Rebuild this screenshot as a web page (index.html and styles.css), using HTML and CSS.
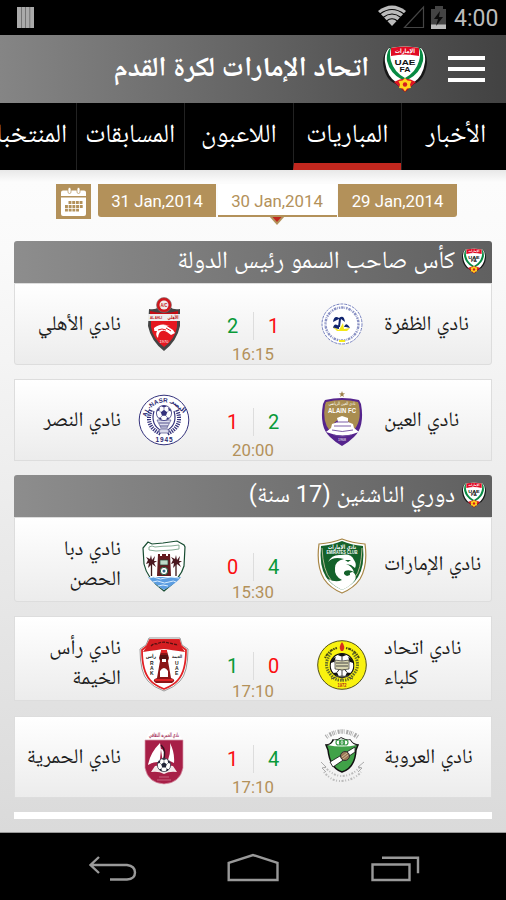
FILE: index.html
```html
<!DOCTYPE html>
<html lang="ar">
<head>
<meta charset="utf-8">
<title>اتحاد الإمارات لكرة القدم</title>
<link rel="stylesheet" href="styles.css">
</head>
<body>
<svg class="defs" width="0" height="0" aria-hidden="true">
  <symbol id="ball" viewBox="0 0 20 20">
    <circle cx="10" cy="10" r="9.500" fill="#fff" stroke="currentColor"/>
    <path d="m10 6 4 3-1.500 4.500h-5L6 9zM6.500 1.500 10 3l3.500-1.500Q10-.5 6.500 1.500zM1 8l3-1 1-4Q1 5 1 8zM19 8l-3-1-1-4q4 2 4 5zM3 16l3-.5 1.500 3Q4 18 3 16zM17 16l-3-.5-1.500 3Q16 18 17 16z" fill="currentColor"/>
    <path d="M10 3v3M4 7l2 2M16 7l-2 2M6 15.500l1.500-2M14 15.500l-1.500-2" stroke="currentColor" stroke-width=".7"/>
  </symbol>
</svg>

<div class="status">
  <svg width="18" height="22" viewBox="0 0 18 22"><path d="M0 0h17v21H0z" fill="#aaa"/><path d="M4.500 0v21M8.500 0v21M12.800 0v21" stroke="#666" stroke-width=".8"/></svg>
  <div class="status-right">
    <svg width="74" height="26" viewBox="0 0 74 26">
      <path d="M0 7Q14-4 28 7L14 22Z" fill="#bbb"/>
      <path d="M2 10Q14 1 26 10M5 13.500Q14 6.500 23 13.500M8.500 17Q14 12.500 19.500 17" fill="none" stroke="#000" stroke-width="1.100"/>
      <path d="M45.500 3v20.500h-19z" fill="none" stroke="#454545" stroke-width="1.200"/>
      <path d="M57 2h8v3h3v20H53V5h4z" fill="#444"/><path d="M53 20.500h15V25H53z" fill="#bbb"/>
      <path d="m62 7-6 8h4l-2 7 7-9h-4z" fill="#0b0b0b"/>
    </svg>
    <span class="clock">4:00</span>
  </div>
</div>

<header class="appbar">
  <h1 class="ar title" dir="rtl">اتحاد الإمارات لكرة القدم</h1>
  <svg class="logo" width="44" height="46" viewBox="0 0 44 46">
    <g id="uaefa">
      <path d="M7 1Q0 6 0 17Q2 34 13 38L22 46L31 38Q42 34 44 17Q44 6 37 1Z" fill="#181818"/>
      <path d="M6 2Q1 7 2 16Q4 31 14 37L22 42L30 37Q40 31 42 16Q43 7 38 2Q22-1 6 2Z" fill="#fff"/>
      <path d="M7 2Q3 7 4 15Q7 27 18 33L22 36L26 33Q37 27 40 15Q41 7 37 2Q22-1 7 2Z" fill="#078a43"/>
      <path d="M8 2Q6 8 8 15Q11 26 22 32Q33 26 36 15Q38 8 36 2Q22-1 8 2Z" fill="#fff"/>
      <path d="M8 2Q22-1 36 2V10Q22 7 8 10Z" fill="#e10b24"/>
      <path d="M11 36Q22 29 33 36L22 46Z" fill="#dd1524"/>
      <path d="m22 32 2.500 2.500 4 .5-1.500 3.500 1 3.500-4 .5-2 3-2-3-4-.5 1-3.500-1.500-3.500 4-.5z" fill="#ffd51c"/>
      <circle cx="22" cy="38.500" r="2.200" fill="#d51d20"/>
      <text x="22" y="7.200" font-size="6" font-weight="700" fill="#fff" text-anchor="middle" textLength="20" lengthAdjust="spacingAndGlyphs" font-family="DejaVu Sans">الإمارات</text>
      <text x="22" y="18.800" font-size="8" font-weight="700" fill="#111" text-anchor="middle" textLength="21" lengthAdjust="spacingAndGlyphs" font-family="Liberation Sans">UAE</text>
      <text x="22" y="25.500" font-size="7.500" font-weight="700" fill="#111" text-anchor="middle" textLength="11" lengthAdjust="spacingAndGlyphs" font-family="Liberation Sans">FA</text>
    </g>
  </svg>
  <div class="burger"><i></i><i></i><i></i></div>
</header>

<nav class="tabs ar" dir="rtl">
  <a class="tab">الأخبار</a>
  <a class="tab active">المباريات</a>
  <a class="tab">اللاعبون</a>
  <a class="tab">المسابقات</a>
  <a class="tab">المنتخبات</a>
</nav>

<main class="content">
  <div class="dates">
    <svg class="cal" width="35" height="35" viewBox="0 0 35 35">
      <path d="M0 0h35v35H0z" fill="#b3915a"/>
      <path d="M5 12V8.500Q5 6.500 7 6.500h21q2 0 2 2V12zM5 13.500h25V30q0 2-2 2H7q-2 0-2-2z" fill="#fff"/>
      <rect x="12" y="3.500" width="3" height="6" rx="1.500" fill="#fff" stroke="#b3915a" stroke-width=".7"/><rect x="21" y="3.500" width="3" height="6" rx="1.500" fill="#fff" stroke="#b3915a" stroke-width=".7"/>
      <path d="M12.500 18.500H27M9 22.500h18M9 26.200h14.500" stroke="#b3915a" stroke-width="2.800" stroke-dasharray="2.900 .8"/>
    </svg>
    <div class="date first">31 Jan,2014</div>
    <div class="date current">30 Jan,2014
      <svg class="pointer" width="16" height="10" viewBox="0 0 16 10"><path d="M0 0h16L8 9z" fill="#b3915a"/><path d="M3.500 1h9L8 6z" fill="#c1271e"/></svg>
    </div>
    <div class="date last">29 Jan,2014</div>
  </div>

  <section class="group">
    <h2 class="league ar" dir="rtl"><svg width="24" height="26" viewBox="0 0 44 46"><use href="#uaefa"/></svg><span class="l1">كأس صاحب السمو رئيس الدولة</span></h2>
    <article class="match">
      <div class="team away ar" dir="rtl"><span>نادي الأهلي</span></div>
      <svg class="crest" width="50" height="54" viewBox="0 0 50 54">
        <path d="M10 12Q17 13 19 10H31Q34 13 41 12V29Q38 44 25 54Q12 44 9 29z" fill="#444"/>
        <path d="M12 23H38V30Q36 42 25 50Q14 42 12 30z" fill="#e41820"/>
        <path d="M11 14Q25 18 39 14V18H11z" fill="#c70c14"/>
        <path d="M9 17h32v7H9z" fill="#ededed"/>
        <circle cx="25" cy="8" r="7.500" fill="#cf171c" stroke="#777" stroke-width=".6"/><circle cx="25" cy="8" r="4.500" fill="#eee"/>
        <text x="25" y="10" font-size="5" text-anchor="middle" font-weight="700" fill="#c11" textLength="7" lengthAdjust="spacingAndGlyphs" font-family="Liberation Sans">A/C</text>
        <text x="17" y="22" font-size="4" text-anchor="middle" font-weight="700" fill="#b11" textLength="12" lengthAdjust="spacingAndGlyphs" font-family="Liberation Sans">AL AHLI</text>
        <text x="34" y="21.500" font-size="5" text-anchor="middle" font-weight="700" fill="#b11" textLength="11" lengthAdjust="spacingAndGlyphs" font-family="DejaVu Sans">الأهلي</text>
        <path d="M15 34Q18 27 27 28.500L34 33 36 36 32 38 28 35Q20 31 19 41Q16 38 18 34zM15 31Q22 25 31 29Q24 27 15 33z" fill="#fff"/>
        <path d="M27 31l5 3M24 34l5 3M19 33q4-2 8 0" fill="none" stroke="#e41820" stroke-width="1"/>
        <text x="25" y="46" font-size="4" text-anchor="middle" fill="#fff" font-family="Liberation Sans">1970</text>
      </svg>
      <div class="result"><div class="scores"><b class="win">2</b><i></i><b class="loss">1</b></div><time>16:15</time></div>
      <svg class="crest" width="50" height="54" viewBox="0 0 50 54">
        <circle cx="25" cy="27" r="20" fill="#fff" stroke="#6874b8" stroke-width=".9" stroke-dasharray="3 1"/>
        <circle cx="25" cy="27" r="16.500" fill="none" stroke="#3c4a9c" stroke-width="2.400" stroke-dasharray="1.500 .9 2.500 .8 .7 1" opacity=".6"/>
        <path d="M16 25Q17 18 22 21Q27 17 28 25L24 22 23 30h-2l1-8zM16 31q1-6 6-2v3zM27 30q2-6 6 1l-4-1z" fill="#10246e"/>
        <path d="M16 30l6 3 4-7 1 6 6-1-3 3H20z" fill="#f4e819"/><path d="M22 44h6" stroke="#f4e819" stroke-width="2"/>
      </svg>
      <div class="team home ar" dir="rtl"><span>نادي الظفرة</span></div>
    </article>
  </section>

  <article class="match single">
    <div class="team away ar" dir="rtl"><span>نادي النصر</span></div>
    <svg class="crest" width="52" height="54" viewBox="-1 0 52 54">
      <circle cx="25" cy="27" r="24.800" fill="#fff" stroke="#34327c"/>
      <path id="arcNasr" d="M7.500 27A17.500 17.500 0 0 1 42.500 27" fill="none"/>
      <text font-size="6.200" font-weight="700" fill="#29276f" font-family="Liberation Sans"><textPath href="#arcNasr" startOffset="3">AL-NASR</textPath></text>
      <text x="38" y="14.500" font-size="6.500" font-weight="700" text-anchor="middle" fill="#29276f" transform="rotate(42 38 14.500)" font-family="DejaVu Sans">النصر</text>
      <text x="25" y="49" font-size="6.500" font-weight="700" text-anchor="middle" fill="#29276f" textLength="17" font-family="Liberation Sans">1945</text>
      <path d="M12 17Q5 33 22 41M38 17Q45 33 28 41" fill="none" stroke="#34327c" stroke-width="4" stroke-dasharray="1.300 1"/>
      <path d="M15 18Q11 32 23 38M35 18Q39 32 27 38" fill="none" stroke="#34327c" stroke-width="1.200"/>
      <path d="M18 27h14l-4 8h-6zM21 36h8l1 4H20z" fill="#dcdcec" stroke="#55538e" stroke-width=".7"/><path d="M20 30h10M21 33h8" stroke="#55538e"/>
      <use href="#ball" x="17" y="12" width="16" height="16" color="#34327c"/>
    </svg>
    <div class="result"><div class="scores"><b class="loss">1</b><i></i><b class="win">2</b></div><time>20:00</time></div>
    <svg class="crest" width="50" height="58" viewBox="0 0 50 58">
      <path d="m25 0 .8 2.300 2.300.1-1.900 1.400.7 2.200-1.900-1.300L23 6l.8-2.200-1.900-1.400 2.300-.1z" fill="#9c7f48"/>
      <path d="M8 9Q25 5 42 9L44 13Q48 36 37 46Q32 51 25 55Q18 51 13 46Q2 36 6 13z" fill="#55248d"/>
      <path d="M9 11Q25 7 41 11L42 14Q45 31 36 40L32 31 25 26 18 31 13 40Q5 31 8 14z" fill="#a98d50"/>
      <path d="m20 27 5-2 6 2v4l5 2 1 4 5 4q-16 7-33 0l5-4 1-4 6-2z" fill="#fff"/>
      <path d="M20 31h11M17 35h17M15 39q10 3 21 0M17 44q8 3 17 0" fill="none" stroke="#6e4b9d" stroke-width=".9"/>
      <text x="25" y="14" font-size="4.500" text-anchor="middle" fill="#fff" textLength="27" lengthAdjust="spacingAndGlyphs" font-family="DejaVu Sans">نادي العين الرياضي</text>
      <text x="25" y="22" font-size="6.500" font-weight="700" text-anchor="middle" fill="#fff" textLength="28" lengthAdjust="spacingAndGlyphs" font-family="Liberation Sans">ALAIN FC</text>
      <text x="25" y="50" font-size="3.500" text-anchor="middle" fill="#fff" font-family="Liberation Sans">1968</text>
    </svg>
    <div class="team home ar" dir="rtl"><span>نادي العين</span></div>
  </article>

  <section class="group">
    <h2 class="league ar" dir="rtl"><svg width="24" height="26" viewBox="0 0 44 46"><use href="#uaefa"/></svg><span class="l2">دوري الناشئين (17 سنة)</span></h2>
    <article class="match tall">
      <div class="team away ar" dir="rtl"><span>نادي دبا<br>الحصن</span></div>
      <svg class="crest" width="50" height="54" viewBox="0 0 50 54">
        <path d="M9 3l4 2 11-1 14-2 7 4 1 2-1 19Q42 39 25 52Q8 40 5 25L4 9z" fill="#fff" stroke="#174c31" stroke-width="1.200"/>
        <path d="M10 8q3-2 6 0 8-1 16-1l8-1v4l-7 1-16 1-7-1z" fill="none" stroke="#78a489" stroke-width=".9"/>
        <path d="M9 38H42Q38 44 25 51Q14 44 9 38z" fill="#5c9de1"/><path d="M10 39q5-2 8 0t8 0 14 0M14 43q5-2 8 0t8 0 7 0M19 47q5-2 10 0" stroke="#d8edff" fill="none"/>
        <path d="M19 15h2v2h2v-2h4v2h2v-2h2l1 22H18z" fill="#641c20"/><path d="M21 21h8v5h-8z" fill="#bedac8" stroke="#243" stroke-width=".7"/><circle cx="25" cy="32" r="3.700" fill="#fff" stroke="#236344"/><circle cx="25" cy="32" r="1.500" fill="#368"/>
        <path d="M12.500 23v14M37 23v14" stroke="#3c1719" stroke-width="1.300"/><path d="m12 16 1 5 3-4-1 5 3 0-3 2 2 4-4-3-4 4 1-5-3 1 2-4-2-3 4 2zM37 16l1 5 3-4-1 5 3 0-3 2 2 4-4-3-4 4 1-5-3 1 2-4-2-3 4 2z" fill="#4a1820"/>
      </svg>
      <div class="result"><div class="scores"><b class="loss">0</b><i></i><b class="win">4</b></div><time>15:30</time></div>
      <svg class="crest" width="50" height="56" viewBox="0 0 50 56">
        <path d="M2 6Q15 5 25 1Q35 5 48 6Q51 28 43 41Q37 50 25 55Q13 50 7 41Q-1 28 2 6z" fill="#fff" stroke="#a88646" stroke-width="1.200"/>
        <path d="M4 8Q16 7 25 3Q34 7 46 8Q48 28 41 39Q36 47 25 52Q14 47 9 39Q2 28 4 8z" fill="#14622b"/>
        <path d="M11 24Q15 16 24 17Q34 15 37 22Q40 26 38 30L34 27 29 26Q35 28 37 34Q32 31 28 33Q25 36 30 38L33 37Q32 34 36 34Q40 37 38 42Q34 48 25 52Q15 47 11 41Q19 45 25 42Q17 38 18 30Q18 23 27 21Q16 18 11 24z" fill="#fff"/>
        <path d="M28 22l6 0-3 2z" fill="#14622b"/>
        <path d="M5 10Q6 33 14 42M45 10Q44 33 38 39" fill="none" stroke="#d8cda9" stroke-width=".8"/>
        <text x="25" y="11" font-size="6" font-weight="700" text-anchor="middle" fill="#fff" textLength="28" lengthAdjust="spacingAndGlyphs" font-family="DejaVu Sans">نادي الإمارات</text>
        <text x="25" y="16" font-size="4.500" font-weight="700" text-anchor="middle" fill="#fff" textLength="31" lengthAdjust="spacingAndGlyphs" font-family="Liberation Sans">EMIRATES CLUB</text>
      </svg>
      <div class="team home ar" dir="rtl"><span>نادي الإمارات</span></div>
    </article>
  </section>

  <article class="match single tall">
    <div class="team away ar" dir="rtl"><span>نادي رأس<br>الخيمة</span></div>
    <svg class="crest" width="52" height="56" viewBox="-1 0 52 56">
      <path d="M10 1H41L43 8 49 12Q49 36 41 44Q36 50 25 54Q14 50 9 44Q1 36 1 12L7 8z" fill="#fff" stroke="#999"/>
      <path d="M11 3H40L42 9 47 13Q47 34 39 43Q35 48 25 52Q15 48 11 43Q3 34 3 13L8 9z" fill="#fff" stroke="#e12225" stroke-width="1.800"/>
      <path d="M11 3H40L42 9 46 15Q32 13 25 12Q18 13 4 15L8 9z" fill="#d51e22"/>
      <path d="M12 9q3-3 6-2 5-3 12-1l9 2" fill="none" stroke="#511" stroke-width="1.300" stroke-dasharray="3 1"/>
      <path d="M22 14h6l2 7-1 3 3 17q6 2 1 5H17q-5-3 1-5l3-17-1-3z" fill="#8c1517"/><path d="M21 18h8v5h-8z" fill="#511"/><path d="M22 13h6v3h-6z" fill="#e12225"/><path d="M23 22h4v3h-4zM21 34q4-6 8 0v6h-8z" fill="#fff"/>
      <path d="M16 43h18" stroke="#e12225" stroke-width="2"/>
      <g font-family="DejaVu Sans" font-size="4.500" font-weight="700" fill="#222" text-anchor="middle"><text x="12" y="21">رأس</text><text x="38" y="21" textLength="10" lengthAdjust="spacingAndGlyphs">الخيمة</text></g>
      <g font-family="Liberation Sans" font-size="5" font-weight="700" fill="#222"><text x="11" y="28">R</text><text x="11" y="33">A</text><text x="11" y="38">K</text><text x="36" y="28">U</text><text x="36" y="33">A</text><text x="36" y="38">E</text></g>
    </svg>
    <div class="result"><div class="scores"><b class="win">1</b><i></i><b class="loss">0</b></div><time>17:10</time></div>
    <svg class="crest" width="50" height="54" viewBox="0 0 50 54">
      <circle cx="25" cy="27" r="24.300" fill="#f9f210" stroke="#52511a"/>
      <path d="M8 20A18 18 0 0 1 20 10M29 10A18 18 0 0 1 42 20" fill="none" stroke="#494813" stroke-width="2" stroke-dasharray="1.500 .8 3 .7"/>
      <path d="M14 15Q5 27 14 37Q18 43 25 42M36 15Q45 27 36 37Q32 43 25 42" fill="none" stroke="#687025" stroke-width="3" stroke-dasharray="1.500 1"/>
      <use href="#ball" x="12.500" y="15" width="25" height="25" color="#111"/>
      <path d="M18 22l7 1 7-1v9l-7 1-7-1z" fill="#d8d6b0" stroke="#333" stroke-width=".7"/><path d="M19 25h12M19 28h12M25 32v10M14 41q11-6 22 0" stroke="#444" fill="none"/>
      <path d="M25 4q4 5 1 9h-2q-3-4 1-9z" fill="#d92c1c"/>
      <text x="25" y="49" font-size="5" font-weight="700" text-anchor="middle" fill="#b82b18" textLength="9" lengthAdjust="spacingAndGlyphs" font-family="Liberation Sans">1972</text>
    </svg>
    <div class="team home ar" dir="rtl"><span>نادي اتحاد<br>كلباء</span></div>
  </article>

  <article class="match single">
    <div class="team away ar" dir="rtl"><span>نادي الحمرية</span></div>
    <svg class="crest" width="50" height="56" viewBox="0 0 50 56">
      <path d="M11 1h27l5 9H7z" fill="#fff"/>
      <text x="25" y="7.500" font-size="6" font-weight="700" text-anchor="middle" fill="#a9385b" textLength="30" lengthAdjust="spacingAndGlyphs" font-family="DejaVu Sans">نادي الحمرية الثقافي</text>
      <path d="M6 11H44V39Q41 54 25 55Q9 54 6 39z" fill="#a71f47" stroke="#db9daf" stroke-width=".7"/>
      <path d="M21 14Q11 24 9 36Q17 31 24 34zM22 20Q27 20 25 34L21 30zM31 14Q36 24 35 34L29 31Q32 23 31 14z" fill="#fff"/>
      <path d="M22 16Q28 21 24 33" fill="none" stroke="#32101f" stroke-width="1.500"/>
      <path d="M12 43l4-6q5-1 9 3 4-4 9-3l4 6q-8-1-13 2-5-3-13-2z" fill="#f5e8eb"/>
      <use href="#ball" x="18" y="29" width="14" height="14" color="#202336"/>
      <path d="M20 48h10M18 51h14" stroke="#d77e99" stroke-width=".7"/>
    </svg>
    <div class="result"><div class="scores"><b class="loss">1</b><i></i><b class="win">4</b></div><time>17:10</time></div>
    <svg class="crest" width="50" height="58" viewBox="0 0 50 58">
      <path d="M9 9Q25-2 41 9" fill="none" stroke="#aaa" stroke-width="4.500" stroke-dasharray="1 1 .5 1.500 2 1 1 .7"/>
      <path d="M9 17q5 0 7-5 4 1 8-2 5 3 9 2 3 5 8 5l-2 5q-1 18-14 22Q13 40 11 22z" fill="#40a248" stroke="#111" stroke-width="1.500"/>
      <path d="M10 17q5 0 7-5 4 1 7-2 5 3 9 2 3 5 7 5-15 3-30 0z" fill="#fff"/>
      <g fill="none" stroke="#3b9b49" stroke-width="1.200"><circle cx="21.500" cy="14.500" r="2.500"/><circle cx="25" cy="14.500" r="2.500"/><circle cx="28.500" cy="14.500" r="2.500"/></g>
      <path d="M13 34 38 19v5L16 39z" fill="#fff" stroke="#111" stroke-width=".8"/><circle cx="28" cy="28" r="4.500" fill="#9a7757" stroke="#333"/><path d="M25 29l5-4M26 31l5-4" stroke="#dfc9a4" stroke-width=".8"/>
      <path d="M8 39Q16 48 25 48Q35 48 43 39M7 44Q15 54 25 53Q37 52 44 44" fill="none" stroke="#bbb" stroke-width="2" stroke-dasharray="1 1.500 2 1.500 1 2"/>
      <path d="M4 34l5 5-4 1 4 4M47 34l-6 5 4 1-4 4" fill="none" stroke="#999" stroke-width=".8"/>
    </svg>
    <div class="team home ar" dir="rtl"><span>نادي العروبة</span></div>
  </article>
  <div class="peek"></div>
</main>

<footer class="navbar">
  <svg width="506" height="67" viewBox="0 833 506 67" fill="none" stroke="#999" stroke-width="2.400">
    <path d="M99 857l-8.500 8 8.500 8M91 865h36q8 1 8 7.500 0 6.500-8 7h-17"/>
    <path d="M228.700 862.800 253 855l24.500 7.800V880h-48.800z"/>
    <path d="M372.500 864.500h37V880h-37zM382 857.700h36v15.500"/>
  </svg>
</footer>
</body>
</html>
```
FILE: styles.css
```css
* { box-sizing: border-box; }
body {
  margin: 0;
  width: 506px;
  height: 900px;
  overflow: hidden;
  display: flex;
  flex-direction: column;
  background: #000;
  font-family: Roboto, "Liberation Sans", sans-serif;
}
.defs { position: absolute; }
svg { display: block; flex: none; }
.ar { font-family: Roboto, "Noto Naskh Arabic", "Noto Sans Arabic", "DejaVu Sans", sans-serif; white-space: nowrap; }

.status { height: 35px; flex: none; display: flex; justify-content: space-between; padding: 7px 9px 0 17px; }
.status-right { display: flex; margin-top: -3px; gap: 2px; }
.clock { color: #bbb; font-size: 23px; line-height: 29px; width: 43px; }

.appbar {
  height: 68px; flex: none;
  display: flex; align-items: center; justify-content: flex-end;
  padding-right: 21px;
  background: linear-gradient(90deg, #858585, #424242);
}
.title { margin: 0; color: #fff; font-size: 27.700px; font-weight: 700; line-height: 40px; padding-bottom: 5px; }
.logo { margin: 0 21px 0 14px; }
.burger { width: 37px; display: flex; flex-direction: column; gap: 7px; }
.burger i { height: 4px; background: #fff; }

.tabs { height: 67px; flex: none; display: flex; overflow: hidden; background: #000; color: #fff; font-size: 26px; }
.tab { flex: none; width: 108.500px; line-height: 61px; text-align: center; border-left: 1px solid #222; }
.tab:first-child { width: 105px; padding-left: 4px; }
.tab.active { border-bottom: 7px solid #c1271e; }

.content { height: 663px; flex: none; padding: 14px 14px 0; background: linear-gradient(#e8e8e8, #fcfcfc 12px, #fafafa 80px, #dadada); border-bottom: 1px solid #999; }
.dates { display: flex; height: 57px; padding-left: 42px; }
.cal { margin-right: 7px; }
.date { position: relative; width: 118px; height: 33px; background: #b3915a; color: #fff; font-size: 16.800px; line-height: 34px; text-align: center; }
.date.first { border-radius: 0 0 0 3px; }
.date.last { border-radius: 0 0 3px; width: 119px; }
.date.current { width: 119px; margin: 0 1.500px; background: #fff; color: #b3915a; border-bottom: 2px solid #b3915a; }
.pointer { position: absolute; left: 51px; top: 32px; }

.league {
  margin: 0; height: 42px; padding-right: 6px;
  display: flex; align-items: center; gap: 7px;
  background: linear-gradient(90deg, #8d8d8d, #606060);
  border-radius: 3px 3px 0 0;
  color: #fff; font-weight: 400; line-height: 36px;
}
.league svg { margin-top: -2px; }
.league span { margin-top: -4px; }
.l1 { font-size: 24.700px; }
.l2 { font-size: 23.600px; }
.match {
  height: 82px;
  display: grid; grid-template-columns: 106px 85px 94px 84px 107px;
  align-items: center;
  background: linear-gradient(#fff, #ececec);
  border: 1px solid #ddd; border-radius: 0 0 3px 3px;
}
.match.tall { height: 85px; }
.match.single { margin: 14px 0; border-radius: 0; }
.match.single + .match.single { margin-top: 15px; }
.team { color: #1c1c1c; font-size: 20.800px; line-height: 30px; text-align: right; padding-bottom: 2px; }
.team.home { justify-self: start; }
.home span { display: block; text-align: left; }
.crest { justify-self: center; }
.tall .team { padding: 6px 0 0; }
.tall .crest { margin-top: 13px; }
.result { align-self: end; }
.scores { display: flex; justify-content: center; align-items: center; height: 30px; }
.scores b { width: 40px; text-align: center; font-size: 20px; font-weight: 400; }
.scores i { width: 1px; height: 28px; background: #ddd; }
.win { color: #0a9a39; }
.loss { color: #fb0d10; }
time { display: block; text-align: center; color: #b3915a; font-size: 16.800px; line-height: 20px; margin-top: 3px; }
.tall time { margin: 0 0 -1px; }
.peek { height: 7px; background: #fff; }
.navbar { height: 67px; flex: none; }
```
